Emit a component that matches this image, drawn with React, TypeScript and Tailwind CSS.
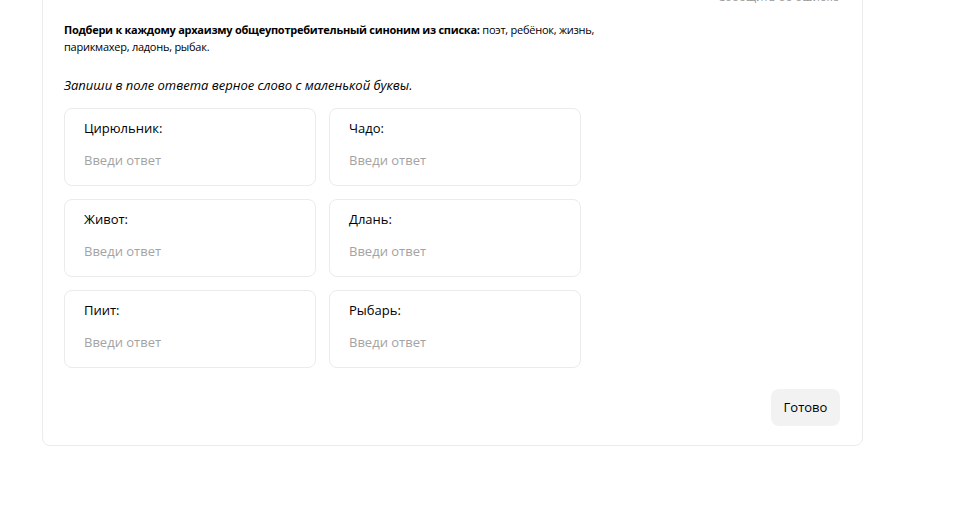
import React from 'react';

const fields = [
  { id: 'c1', label: 'Цирюльник:' },
  { id: 'c2', label: 'Чадо:' },
  { id: 'c3', label: 'Живот:' },
  { id: 'c4', label: 'Длань:' },
  { id: 'c5', label: 'Пиит:' },
  { id: 'c6', label: 'Рыбарь:' },
];

export default function App() {
  return (
    <div className="min-h-screen bg-white pl-[42px] font-['Open_Sans',sans-serif] text-black">
      <div className="-mt-[30px] w-[821px] rounded-lg border border-[#ebebeb] pb-[19px] pl-[21px] pr-[22px] pt-[18px]">
        {/* ссылка об ошибке */}
        <div className="flex justify-end pr-[1px] text-[11.5px] leading-4 text-[#9a9a9a]">
          <span>Сообщить об ошибке</span>
        </div>

        <p className="mt-[16px] w-[545px] text-[11px] leading-[17px] tracking-[-0.25px]">
          <b>Подбери к каждому архаизму общеупотребительный синоним из списка:</b> поэт, ребёнок, жизнь,
          парикмахер, ладонь, рыбак.
        </p>

        <p className="mt-[22px] text-[13px] italic leading-4">Запиши в поле ответа верное слово с маленькой буквы.</p>

        <div className="mt-[15px] grid w-[517px] grid-cols-2 gap-x-[13px] gap-y-[13px]">
          {fields.map((f) => (
            <label key={f.id} className="flex h-[78px] flex-col rounded-lg border border-[#ebebeb] px-[19px] pt-[11px]">
              <span className="text-[13px] leading-4">{f.label}</span>
              <input
                placeholder="Введи ответ"
                className="mt-[16px] text-[13px] leading-4 outline-none placeholder:text-[#a3a3a3]"
              />
            </label>
          ))}
        </div>

        <div className="mt-[21px] flex justify-end">
          <button className="h-[37px] w-[69px] rounded-lg bg-[#f2f2f2] text-[13px]">Готово</button>
        </div>
      </div>
    </div>
  );
}
